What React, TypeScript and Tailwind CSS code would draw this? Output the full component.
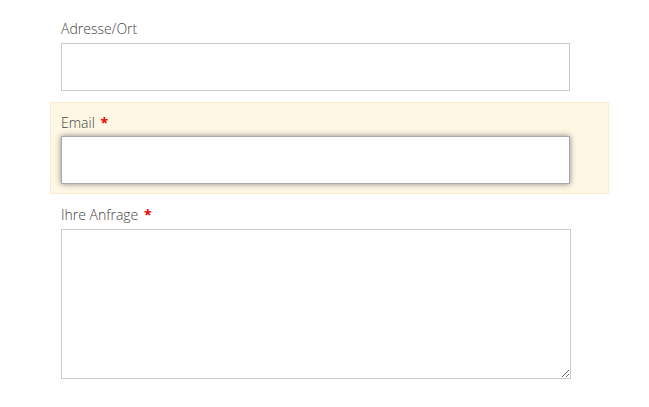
export default function App() {
  return (
    <div className="min-h-[407px] bg-white pt-[9px] font-['Open_Sans',sans-serif] font-light text-[14px] text-[#444]">
      <form onSubmit={(e) => e.preventDefault()} className="flex flex-col">
        <div className="ml-[50px] w-[559px] h-[93px] border border-transparent pt-[9px] pl-[10px]">
          <label className="block h-[20px] leading-[20px]">Adresse/Ort</label>
          <input
            type="text"
            className="mt-[4px] block w-[509px] h-[48px] border border-[#c9c9c9] bg-white outline-none"
          />
        </div>

        <div className="ml-[50px] w-[559px] h-[92px] border border-[#f8edd3] bg-[#fdf7e4] pt-[10px] pl-[10px]">
          <label className="block h-[20px] leading-[20px]">
            Email <span className="ml-[2px] font-bold text-[#e00]">*</span>
          </label>
          <input
            type="email"
            className="mt-[3px] block w-[509px] h-[48px] border border-[#a9a9a9] bg-white outline-none shadow-[0_0_6px_#888]"
          />
        </div>

        <div className="ml-[50px] w-[559px] border border-transparent pt-[10px] pl-[10px]">
          <label className="block h-[20px] leading-[20px]">
            Ihre Anfrage <span className="ml-[2px] font-bold text-[#e00]">*</span>
          </label>
          <textarea className="mt-[4px] block w-[510px] h-[150px] border border-[#c9c9c9] bg-white outline-none" />
        </div>
      </form>
    </div>
  );
}
